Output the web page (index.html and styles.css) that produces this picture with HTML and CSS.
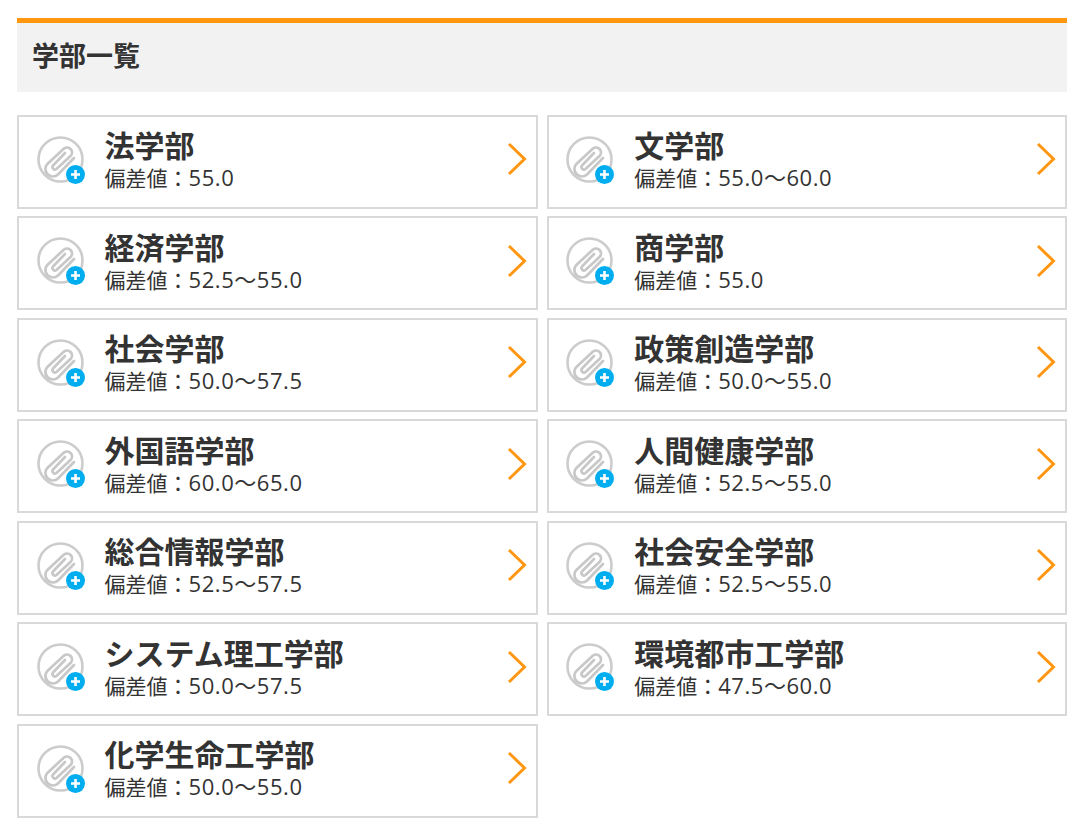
FILE: index.html
```html
<!DOCTYPE html>
<html lang="ja">
<head>
<meta charset="utf-8">
<title>学部一覧</title>
<link rel="stylesheet" href="styles.css">
</head>
<body>
<svg class="defs" width="0" height="0" aria-hidden="true">
  <symbol id="clip" viewBox="0 0 48 48">
    <circle cx="23.5" cy="23.5" r="22" fill="none" stroke="#ccc" stroke-width="2.6"/>
    <path transform="translate(1 1)" d="M36 21L20 37.5a7.5 7.5 0 0 1-10.6-10.6L26 11.5a5 5 0 0 1 7 7L18.5 32a2.5 2.5 0 0 1-3.5-3.5L27 16" fill="none" stroke="#c8c8c8" stroke-width="2.7" stroke-linecap="round" stroke-linejoin="round"/>
    <circle cx="38.5" cy="38.5" r="9.5" fill="#00adef"/>
    <path d="M38.5 34v9M34 38.5h9" stroke="#fff" stroke-width="2.6"/>
  </symbol>
  <symbol id="chev" viewBox="0 0 20 34">
    <path d="M2 2 L17.5 17 L2 32" fill="none" stroke="#ff9610" stroke-width="3"/>
  </symbol>
</svg>
<main class="page">
  <h2 class="heading">学部一覧</h2>
  <div class="grid">
    <a class="card"><svg class="clip"><use href="#clip"/></svg><div class="body"><div class="name">法学部</div><div class="score"><span class="label">偏差値：</span><span class="value">55.0</span></div></div><svg class="chev"><use href="#chev"/></svg></a>
    <a class="card"><svg class="clip"><use href="#clip"/></svg><div class="body"><div class="name">文学部</div><div class="score"><span class="label">偏差値：</span><span class="value">55.0～60.0</span></div></div><svg class="chev"><use href="#chev"/></svg></a>
    <a class="card"><svg class="clip"><use href="#clip"/></svg><div class="body"><div class="name">経済学部</div><div class="score"><span class="label">偏差値：</span><span class="value">52.5～55.0</span></div></div><svg class="chev"><use href="#chev"/></svg></a>
    <a class="card"><svg class="clip"><use href="#clip"/></svg><div class="body"><div class="name">商学部</div><div class="score"><span class="label">偏差値：</span><span class="value">55.0</span></div></div><svg class="chev"><use href="#chev"/></svg></a>
    <a class="card"><svg class="clip"><use href="#clip"/></svg><div class="body"><div class="name">社会学部</div><div class="score"><span class="label">偏差値：</span><span class="value">50.0～57.5</span></div></div><svg class="chev"><use href="#chev"/></svg></a>
    <a class="card"><svg class="clip"><use href="#clip"/></svg><div class="body"><div class="name">政策創造学部</div><div class="score"><span class="label">偏差値：</span><span class="value">50.0～55.0</span></div></div><svg class="chev"><use href="#chev"/></svg></a>
    <a class="card"><svg class="clip"><use href="#clip"/></svg><div class="body"><div class="name">外国語学部</div><div class="score"><span class="label">偏差値：</span><span class="value">60.0～65.0</span></div></div><svg class="chev"><use href="#chev"/></svg></a>
    <a class="card"><svg class="clip"><use href="#clip"/></svg><div class="body"><div class="name">人間健康学部</div><div class="score"><span class="label">偏差値：</span><span class="value">52.5～55.0</span></div></div><svg class="chev"><use href="#chev"/></svg></a>
    <a class="card"><svg class="clip"><use href="#clip"/></svg><div class="body"><div class="name">総合情報学部</div><div class="score"><span class="label">偏差値：</span><span class="value">52.5～57.5</span></div></div><svg class="chev"><use href="#chev"/></svg></a>
    <a class="card"><svg class="clip"><use href="#clip"/></svg><div class="body"><div class="name">社会安全学部</div><div class="score"><span class="label">偏差値：</span><span class="value">52.5～55.0</span></div></div><svg class="chev"><use href="#chev"/></svg></a>
    <a class="card"><svg class="clip"><use href="#clip"/></svg><div class="body"><div class="name">システム理工学部</div><div class="score"><span class="label">偏差値：</span><span class="value">50.0～57.5</span></div></div><svg class="chev"><use href="#chev"/></svg></a>
    <a class="card"><svg class="clip"><use href="#clip"/></svg><div class="body"><div class="name">環境都市工学部</div><div class="score"><span class="label">偏差値：</span><span class="value">47.5～60.0</span></div></div><svg class="chev"><use href="#chev"/></svg></a>
    <a class="card"><svg class="clip"><use href="#clip"/></svg><div class="body"><div class="name">化学生命工学部</div><div class="score"><span class="label">偏差値：</span><span class="value">50.0～55.0</span></div></div><svg class="chev"><use href="#chev"/></svg></a>
  </div>
</main>
</body>
</html>
```
FILE: styles.css
```css
* { box-sizing: border-box; }
html, body { margin: 0; padding: 0; background: #fff; }
body {
  font-family: "Open Sans", "Noto Sans CJK JP", sans-serif;
  color: #333;
}
.defs { position: absolute; }
.page { padding: 18px 18px 0 17px; }
.heading {
  margin: 0 0 23px;
  height: 74px;
  padding: 0 16px 4px 15px;
  display: flex;
  align-items: center;
  background: #f2f2f2;
  border-top: 5px solid #ff9610;
  font-size: 27px;
  font-weight: 700;
  line-height: 1;
}
.grid {
  display: grid;
  grid-template-columns: 520.6px 520.4px;
  column-gap: 9px;
  row-gap: 7.8px;
  grid-auto-rows: 93.7px;
}
.card {
  display: flex;
  align-items: center;
  border: 2px solid #d9d9d9;
  padding-left: 17.8px;
  background: #fff;
}
.clip { width: 48px; height: 48px; flex: none; margin: 0 19.2px 4px 0; }
.body { flex: 1; min-width: 0; padding-left: 0.6px; }
.name { font-size: 30px; font-weight: 700; line-height: 34px; }
.score { line-height: 28px; white-space: nowrap; }
.label { font-size: 21px; }
.value { font-size: 22px; letter-spacing: 0.55px; }
.chev { width: 20px; height: 34px; flex: none; margin: 0 9px 5px 0; }
```
